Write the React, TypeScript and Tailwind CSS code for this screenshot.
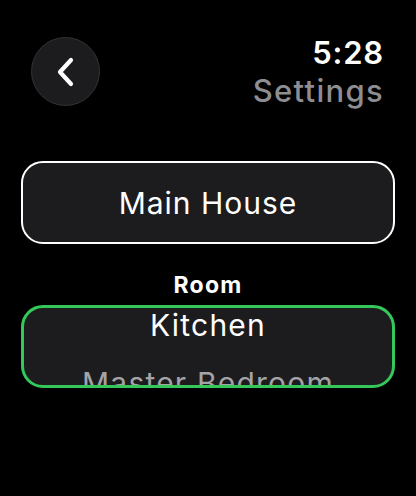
import React from "react";

export default function App() {
  return (
    <div
      className="w-[416px] h-[496px] bg-black text-white overflow-hidden"
      style={{ fontFamily: "Inter, 'Noto Sans', sans-serif" }}
    >
      <div className="flex justify-between items-start pl-[31px] pr-[32px] pt-[37px]">
        <div className="w-[69px] h-[69px] rounded-full bg-[#1c1c1e] border border-[#333336] flex items-center justify-center">
          <svg width="22" height="32" viewBox="0 0 22 32" fill="none">
            <path d="M16 4 L5 16 L16 28" stroke="white" strokeWidth="4.2" strokeLinecap="round" strokeLinejoin="round" />
          </svg>
        </div>
        <div className="flex flex-col items-end -mt-[2px]">
          <div className="text-[31px] leading-[36px] font-semibold tracking-[0.8px]">5:28</div>
          <div className="text-[31px] leading-[36px] text-[#8d8d92] font-medium tracking-[1.3px] mt-[2px]">Settings</div>
        </div>
      </div>
      <div className="px-[21px] mt-[52px]">
        <div className="h-[83px] rounded-[22px] border-2 border-white bg-[#1c1c1e] flex items-center justify-center text-[30px] tracking-[1px] pt-[1px]">
          Main House
        </div>
        <div className="text-center text-[23px] font-bold mt-[28px] leading-[26px] tracking-[1.2px]">Room</div>
        <div className="mt-[7px] h-[83px] rounded-[22px] border-[3px] border-[#34c759] bg-[#1c1c1e] overflow-hidden relative flex flex-col items-center">
          <div className="text-[30px] leading-[36px] -mt-[1px] tracking-[1.2px]">Kitchen</div>
          <div className="text-[30px] leading-[36px] mt-[22px] tracking-[1.2px] text-[#a4a4a8]">Master Bedroom</div>
        </div>
      </div>
    </div>
  );
}
